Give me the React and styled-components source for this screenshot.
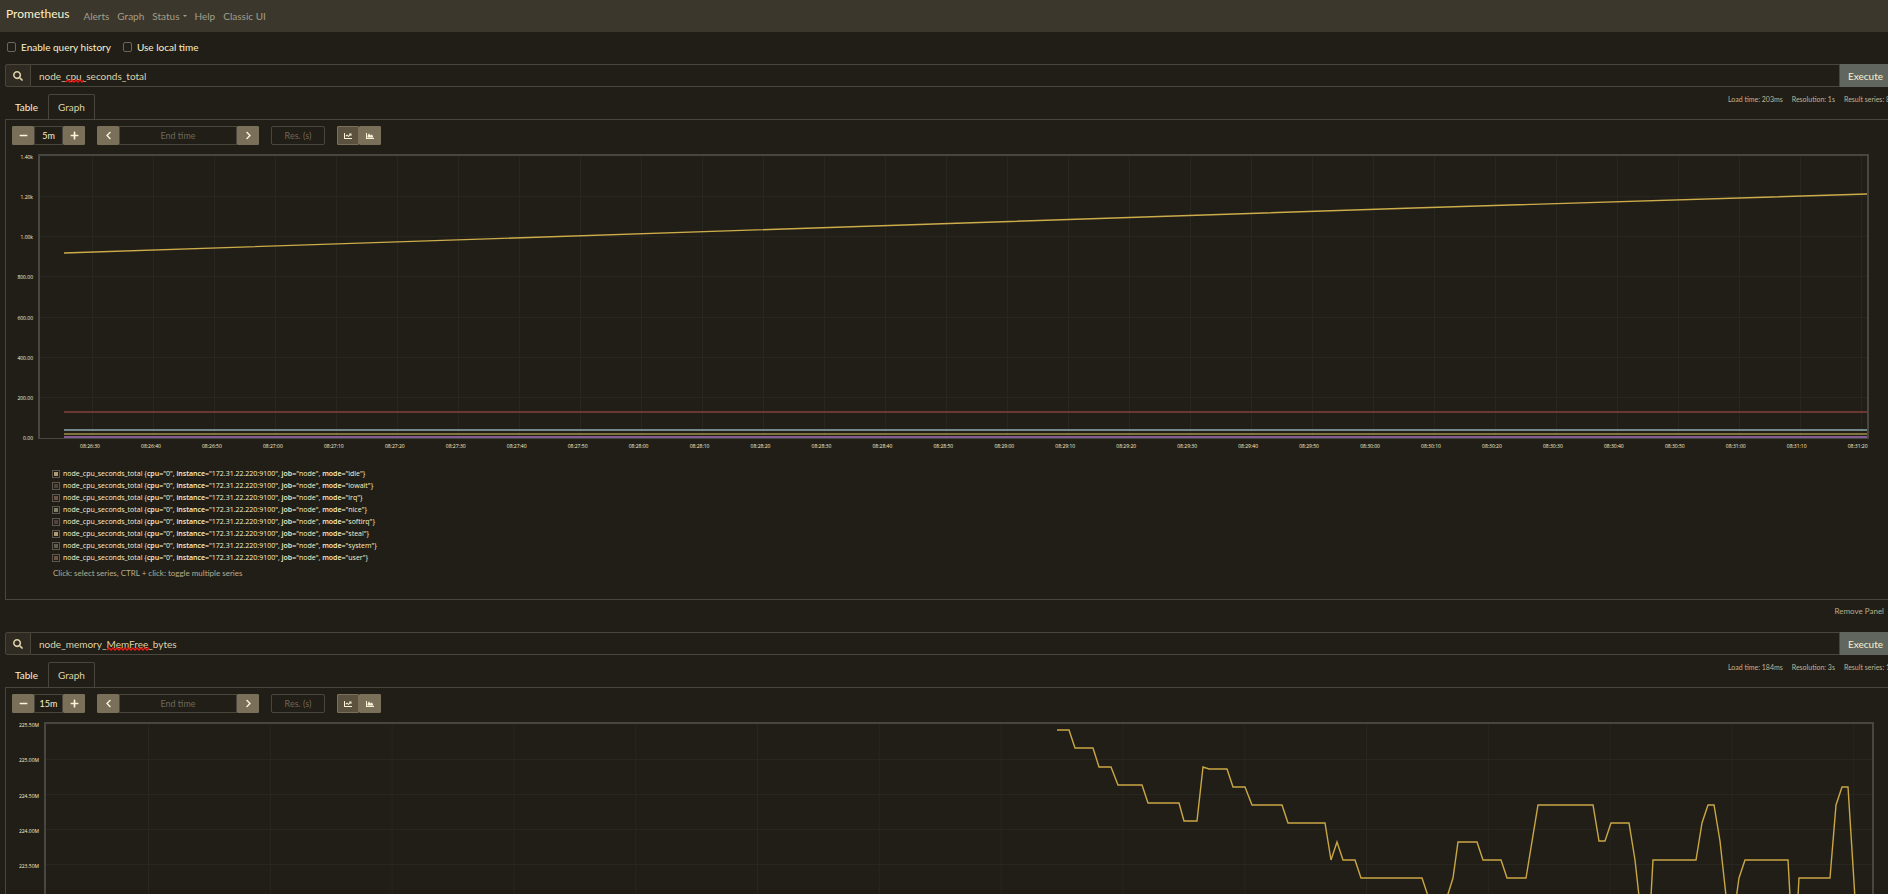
import React from "react";
import styled, { createGlobalStyle } from "styled-components";
import {
  FaSearch,
  FaMinus,
  FaPlus,
  FaChevronLeft,
  FaChevronRight,
  FaChartLine,
  FaChartArea,
} from "react-icons/fa";

const color = {
  bg: "#211e17",
  nav: "#3b372c",
  line: "#4a463b",
  text: "#fbf1cd",
  soft: "#dfd2aa",
  muted: "#a39e8a",
  faint: "#6e6858",
  button: "#7a7059",
  execute: "#61665f",
};

const GlobalStyle = createGlobalStyle`
  *, *::before, *::after { box-sizing: border-box; }
  body {
    margin: 0;
    background: ${color.bg};
    color: ${color.text};
    font-family: Lato, "Open Sans", sans-serif;
    font-size: 10px;
    line-height: 16px;
  }
  button, input { font: inherit; color: inherit; }
`;

const Page = styled.div`
  height: 100vh;
  overflow: hidden;
`;

const Navbar = styled.nav`
  display: flex;
  align-items: center;
  height: 32px;
  padding: 0 6px;
  gap: 14px;
  background: ${color.nav};
`;

const Brand = styled.a`
  color: ${color.text};
  font-size: 12px;
  line-height: 28px;
  align-self: flex-start;
  text-decoration: none;
`;

const NavLinks = styled.div`
  display: flex;
  gap: 8px;
`;

const NavLink = styled.a`
  display: flex;
  align-items: center;
  gap: 3px;
  color: ${color.muted};
  text-decoration: none;
`;

const Caret = styled.span`
  border: 2px solid transparent;
  border-top-color: currentColor;
  border-bottom: 0;
`;

const Main = styled.main`
  margin: 0 -4px 0 5px;
`;

const Options = styled.div`
  display: flex;
  gap: 12px;
  padding: 7px 2px 9px;
`;

const Option = styled.label`
  display: flex;
  align-items: center;
  gap: 5px;
`;

const Checkbox = styled.input`
  appearance: none;
  width: 9px;
  height: 10px;
  margin: 0;
  border: 1px solid #6b6656;
  border-radius: 2px;
  background: transparent;
`;

const QueryBar = styled.form`
  display: flex;
  height: 23px;
`;

const QueryIcon = styled.label`
  display: flex;
  align-items: center;
  justify-content: center;
  width: 26px;
  border: 1px solid ${color.line};
  border-radius: 2px 0 0 2px;
  background: #2f2b22;
  color: ${color.soft};
  font-size: 10px;
`;

const QueryField = styled.div`
  position: relative;
  flex: 1;
`;

const QueryInput = styled.input`
  display: block;
  width: 100%;
  height: 23px;
  padding: 1px 8px 0;
  border: 1px solid ${color.line};
  border-left: 0;
  background: transparent;
  color: ${color.soft};
  outline: none;
`;

const Squiggle = styled.svg`
  position: absolute;
  left: ${(p) => p.$left}px;
  top: 15px;
`;

const Execute = styled.button`
  padding: 0 9px 0 8px;
  border: 0;
  background: ${color.execute};
`;

const TabRow = styled.div`
  display: flex;
  justify-content: space-between;
  height: 32px;
  padding-top: 7px;
`;

const Tabs = styled.div`
  display: flex;
`;

const Tab = styled.button`
  padding: 0 9px;
  border: 1px solid ${(p) => (p.$active ? color.line : "transparent")};
  border-bottom: 0;
  border-radius: 2px 2px 0 0;
  background: ${color.bg};
  color: ${(p) => (p.$active ? color.soft : color.text)};
`;

const Stats = styled.div`
  display: flex;
  gap: 9px;
  padding-right: 2px;
  color: #c0b391;
  font-size: 7px;
  line-height: 10px;
`;

const PanelBody = styled.section`
  height: 481px;
  padding: 6px;
  border: 1px solid ${color.line};
`;

const Toolbar = styled.div`
  display: flex;
  gap: 12px;
  height: 19px;
`;

const Group = styled.div`
  display: flex;
`;

const ToolButton = styled.button`
  display: flex;
  align-items: center;
  justify-content: center;
  width: 22px;
  padding: 0;
  border: 1px solid ${color.button};
  border-radius: 1px;
  background: ${(p) => (p.$pressed ? "#5a523f" : color.button)};
  color: #fbf3d6;
  font-size: ${(p) => (p.$small ? 8 : 9)}px;
`;

const ToolInput = styled.input`
  width: ${(p) => p.$width}px;
  padding: 0;
  border: 1px solid ${color.line};
  border-radius: ${(p) => (p.$alone ? 2 : 0)}px;
  background: transparent;
  font-size: 9px;
  text-align: center;
  outline: none;
  &::placeholder { color: ${color.faint}; opacity: 1; }
`;

const Chart = styled.div`
  display: grid;
  grid-template-columns: ${(p) => p.$axis}px 1fr;
  column-gap: 5px;
  margin: 9px ${(p) => p.$right}px 0 0;
`;

const YAxis = styled.div`
  display: flex;
  flex-direction: column;
  justify-content: space-between;
  height: ${(p) => p.$height}px;
  color: ${color.text};
  font-family: "Open Sans", sans-serif;
  font-size: 5px;
  line-height: 6px;
  text-align: right;
`;

const Plot = styled.div`
  height: 285px;
  border: 2px solid #484640;
  border-bottom-width: 1px;
`;

const PlotSvg = styled.svg`
  display: block;
  width: 100%;
  height: 100%;
  fill: none;
  path, polyline { vector-effect: non-scaling-stroke; }
`;

const XAxis = styled.div`
  grid-column: 2;
  display: flex;
  justify-content: space-between;
  padding: 2px 1px 0 42px;
  color: ${color.text};
  font-family: "Open Sans", sans-serif;
  font-size: 5px;
  line-height: 6px;
`;

const XLabel = styled.span`
  display: flex;
  justify-content: center;
  width: 20px;
`;

const Legend = styled.ul`
  margin: 19px 0 0 40px;
  padding: 0;
  list-style: none;
`;

const LegendItem = styled.li`
  display: flex;
  align-items: center;
  gap: 3px;
  font-family: "Open Sans", sans-serif;
  font-size: 7px;
  line-height: 12px;
  white-space: pre;
  b { font-weight: 600; }
`;

const Swatch = styled.span`
  width: 8px;
  height: 8px;
  padding: 1px;
  border: 1px solid #5d584b;
  background: ${(p) => p.$color} content-box;
`;

const Hint = styled.p`
  margin: 3px 0 0 41px;
  color: #b8ad8e;
  font-size: 8px;
  line-height: 12px;
`;

const PanelFooter = styled.div`
  display: flex;
  justify-content: flex-end;
  height: 32px;
  padding: 3px 8px 0 0;
`;

const RemoveButton = styled.button`
  align-self: flex-start;
  padding: 0;
  border: 0;
  background: none;
  color: #b8ad8e;
  font-size: 8px;
  line-height: 16px;
`;

const cpuTimes = Array.from({ length: 30 }, (_, i) => {
  const s = 26 * 60 + 30 + i * 10;
  return `08:${Math.floor(s / 60)}:${String(s % 60).padStart(2, "0")}`;
});

const cpuModes = [
  ["idle", "#b09c74"],
  ["iowait", "#4c4438"],
  ["irq", "#6b5448"],
  ["nice", "#85806a"],
  ["softirq", "#4f4240"],
  ["steal", "#b09c74"],
  ["system", "#625c50"],
  ["user", "#6b5444"],
];

const cpuLines = [
  { stroke: "#cdac4a", points: "24,97 474,82 924,67 1374,52 1828,38" },
  { stroke: "#85403c", points: "24,256 1828,256" },
  { stroke: "#74878a", points: "24,274 1828,274", width: 2 },
  { stroke: "#a18f48", points: "24,278 1828,278" },
  { stroke: "#845e92", points: "24,281 1828,281", width: 2 },
];

const memLines = [
  {
    stroke: "#c9a745",
    points:
      "1011,6 1023,6 1029,24 1047,24 1053,43 1065,43 1072,61 1096,61 1102,79 1133,79 1138,97 1151,97 1157,43 1163,45 1181,45 1187,63 1199,63 1206,81 1236,81 1242,99 1279,99 1285,136 1291,118 1297,136 1309,136 1315,154 1376,154 1382,172 1388,190 1396,190 1402,170 1407,154 1412,118 1431,118 1437,136 1455,136 1461,154 1480,154 1492,81 1547,81 1553,117 1559,117 1565,99 1583,99 1589,136 1595,190 1604,190 1607,136 1650,136 1656,99 1662,81 1668,81 1674,117 1682,190 1688,190 1693,154 1699,136 1742,136 1745,190 1751,190 1753,154 1784,154 1790,81 1796,63 1802,63 1810,190 1826,190",
  },
];

const range = (from, step, count) => Array.from({ length: count }, (_, i) => from + i * step);

function Graph({ axis, right, span, yLabels, yHeight, gridX, gridY, lines, xLabels = [] }) {
  return (
    <Chart $axis={axis} $right={right}>
      <YAxis $height={yHeight}>
        {yLabels.map((l) => (
          <span key={l}>{l}</span>
        ))}
      </YAxis>
      <Plot>
        <PlotSvg viewBox={`0 0 ${span} 282`} preserveAspectRatio="none" role="img" aria-label="Time series">
          <path
            stroke="#282620"
            d={gridX.map((x) => `M${x} 0V282`).join("") + gridY.map((y) => `M0 ${y}H${span}`).join("")}
          />
          {lines.map((l) => (
            <polyline key={l.stroke} points={l.points} stroke={l.stroke} strokeWidth={l.width || 1.4} />
          ))}
        </PlotSvg>
      </Plot>
      {xLabels.length > 0 && (
        <XAxis>
          {xLabels.map((l) => (
            <XLabel key={l}>{l}</XLabel>
          ))}
        </XAxis>
      )}
    </Chart>
  );
}

function Panel({ id, query, squiggle, stats, duration, children }) {
  const [left, width] = squiggle;
  const wave = "M0 3" + range(2, 4, Math.ceil(width / 4)).map((x) => `L${x} 1L${x + 2} 3`).join("");
  return (
    <>
      <QueryBar onSubmit={(e) => e.preventDefault()}>
        <QueryIcon htmlFor={id} aria-label="Expression">
          <FaSearch />
        </QueryIcon>
        <QueryField>
          <QueryInput id={id} defaultValue={query} spellCheck={false} />
          <Squiggle $left={left} width={width} height="4" fill="none" stroke="#f01a12" strokeWidth="1.3" aria-hidden="true">
            <path d={wave} />
          </Squiggle>
        </QueryField>
        <Execute type="submit">Execute</Execute>
      </QueryBar>
      <TabRow>
        <Tabs>
          <Tab type="button">Table</Tab>
          <Tab type="button" $active>Graph</Tab>
        </Tabs>
        <Stats>
          {stats.map((s) => (
            <span key={s}>{s}</span>
          ))}
        </Stats>
      </TabRow>
      <PanelBody>
        <Toolbar>
          <Group>
            <ToolButton type="button" aria-label="Decrease range"><FaMinus /></ToolButton>
            <ToolInput $width={29} defaultValue={duration} aria-label="Range" />
            <ToolButton type="button" aria-label="Increase range"><FaPlus /></ToolButton>
          </Group>
          <Group>
            <ToolButton type="button" aria-label="Earlier"><FaChevronLeft /></ToolButton>
            <ToolInput $width={118} placeholder="End time" aria-label="End time" />
            <ToolButton type="button" aria-label="Later"><FaChevronRight /></ToolButton>
          </Group>
          <ToolInput $width={54} $alone placeholder="Res. (s)" aria-label="Resolution in seconds" />
          <Group>
            <ToolButton type="button" $small $pressed aria-label="Line graph"><FaChartLine /></ToolButton>
            <ToolButton type="button" $small aria-label="Stacked graph"><FaChartArea /></ToolButton>
          </Group>
        </Toolbar>
        {children}
      </PanelBody>
    </>
  );
}

export default function App() {
  return (
    <Page>
      <GlobalStyle />
      <Navbar>
        <Brand href="#">Prometheus</Brand>
        <NavLinks>
          <NavLink href="#">Alerts</NavLink>
          <NavLink href="#">Graph</NavLink>
          <NavLink href="#">Status<Caret /></NavLink>
          <NavLink href="#">Help</NavLink>
          <NavLink href="#">Classic UI</NavLink>
        </NavLinks>
      </Navbar>
      <Main>
        <Options>
          <Option><Checkbox type="checkbox" />Enable query history</Option>
          <Option><Checkbox type="checkbox" />Use local time</Option>
        </Options>
        <Panel
          id="query-cpu"
          query="node_cpu_seconds_total"
          squiggle={[35, 18]}
          stats={["Load time: 203ms", "Resolution: 1s", "Result series: 8"]}
          duration="5m"
        >
          <Graph
            axis={21}
            right={16}
            span={1827}
            yHeight={287}
            yLabels={["1.40k", "1.20k", "1.00k", "800.00", "600.00", "400.00", "200.00", "0.00"]}
            gridX={range(52.5, 61, 30)}
            gridY={[40.5, 80.5, 120.5, 161.5, 201.5, 241.5]}
            lines={cpuLines}
            xLabels={cpuTimes}
          />
          <Legend>
            {cpuModes.map(([mode, swatch]) => (
              <LegendItem key={mode}>
                <Swatch $color={swatch} />
                <span>
                  node_cpu_seconds_total {"{"}<b>cpu=</b>"0", <b>instance=</b>"172.31.22.220:9100", <b>job=</b>"node", <b>mode=</b>"{mode}"{"}"}
                </span>
              </LegendItem>
            ))}
          </Legend>
          <Hint>Click: select series, CTRL + click: toggle multiple series</Hint>
        </Panel>
        <PanelFooter>
          <RemoveButton type="button">Remove Panel</RemoveButton>
        </PanelFooter>
        <Panel
          id="query-memory"
          query="node_memory_MemFree_bytes"
          squiggle={[76, 42]}
          stats={["Load time: 184ms", "Resolution: 3s", "Result series: 1"]}
          duration="15m"
        >
          <Graph
            axis={27}
            right={11}
            span={1826}
            yHeight={147}
            yLabels={["225.50M", "225.00M", "224.50M", "224.00M", "223.50M"]}
            gridX={range(102.5, 121.8, 15)}
            gridY={range(35.5, 35, 7)}
            lines={memLines}
          />
        </Panel>
      </Main>
    </Page>
  );
}
